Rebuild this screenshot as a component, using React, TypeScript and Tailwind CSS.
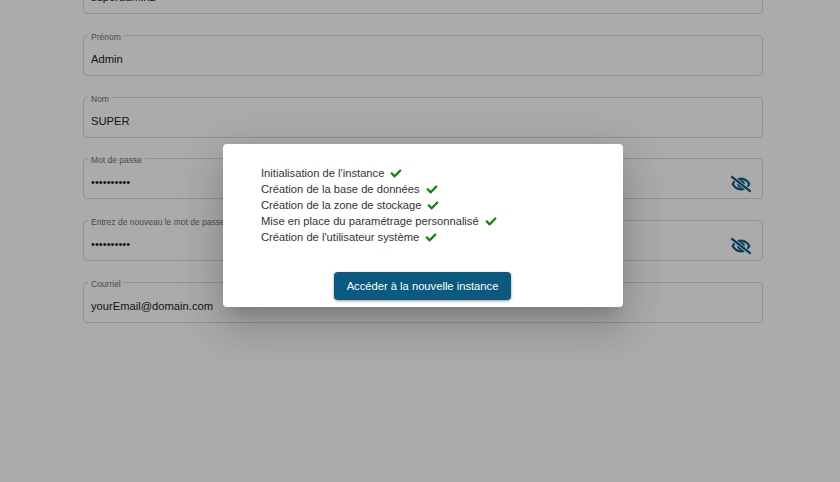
import React from "react";
import { FaCheck, FaRegEyeSlash } from "react-icons/fa";

function Field({ label, value, password }: { label: string; value: string; password?: boolean }) {
  return (
    <fieldset className="relative h-[46px] rounded-[4px] border border-[#d9d9d9] pl-[4px] pr-[7px]">
      <legend className="ml-0 h-[11px] px-[3px] text-[8.5px] leading-[11px] text-[#707070]">
        <span className="relative top-[2px]">{label}</span>
      </legend>
      <div className="pl-[3px] pt-[11px] text-[11.2px] leading-[14px] text-[#222]">{value}</div>
      {password ? (
        <FaRegEyeSlash
          stroke="currentColor"
          strokeWidth={28}
          className="absolute right-[11px] top-[10px] h-[20px] w-[20px] text-[#0a5a80]"
        />
      ) : null}
    </fieldset>
  );
}

const steps = [
  "Initialisation de l'instance",
  "Création de la base de données",
  "Création de la zone de stockage",
  "Mise en place du paramétrage personnalisé",
  "Création de l'utilisateur système",
];

export default function App() {
  return (
    <div className="relative h-[482px] w-[840px] overflow-hidden bg-white font-['Liberation_Sans',Arial,sans-serif]">
      <div className="ml-[83px] mr-[77px] mt-[-32px] flex flex-col gap-[15.75px]">
        <Field label="Identifiant" value="superadmin2" />
        <Field label="Prénom" value="Admin" />
        <Field label="Nom" value="SUPER" />
        <Field label="Mot de passe" value="••••••••••" password />
        <Field label="Entrez de nouveau le mot de passe" value="••••••••••" password />
        <Field label="Courriel" value="yourEmail@domain.com" />
      </div>
      <div className="absolute inset-0 flex justify-center bg-[#00000054] pl-[6px] pt-[144px]">
        <div className="flex h-[163px] w-[400px] flex-col rounded-[4px] bg-white shadow-[0_11px_15px_-7px_rgba(0,0,0,0.17),0_24px_38px_3px_rgba(0,0,0,0.1),0_9px_46px_8px_rgba(0,0,0,0.09)]">
          <ul className="pl-[38px] pt-[21px] text-[11.2px] leading-[16px] text-[#333]">
            {steps.map((s) => (
              <li key={s} className="flex h-[16px] items-center">
                <span>{s}</span>
                <FaCheck className="ml-[6px] h-[11px] w-[12px] shrink-0 text-[#008a00]" />
              </li>
            ))}
          </ul>
          <div className="ml-[111px] mt-[27px] flex">
            <button className="h-[28px] w-[177px] rounded-[4px] bg-[#0a5a80] text-[11.2px] text-white shadow-[0_1px_3px_rgba(0,0,0,0.4)]">
              Accéder à la nouvelle instance
            </button>
          </div>
        </div>
      </div>
    </div>
  );
}
